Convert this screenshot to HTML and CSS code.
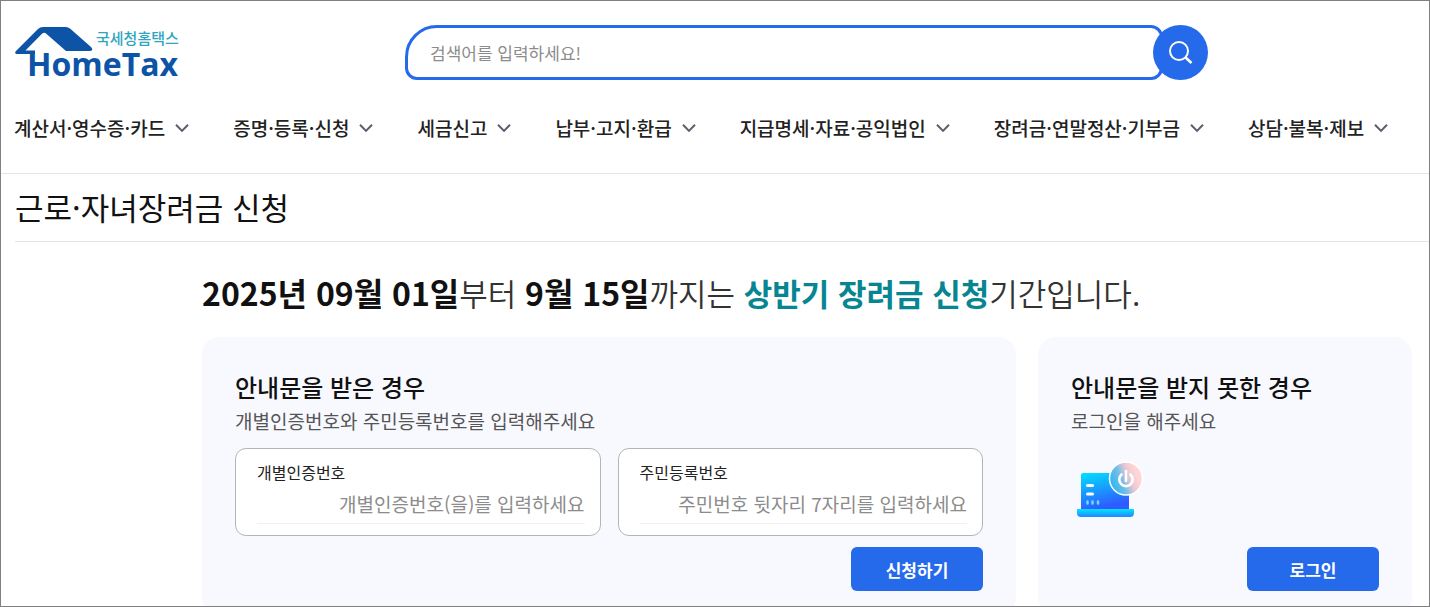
FILE: index.html
```html
<!DOCTYPE html>
<html lang="ko">
<head>
    <meta charset="UTF-8">
    <meta name="viewport" content="width=device-width, initial-scale=1.0">
    <title>국세청 홈택스</title>
    <link rel="stylesheet" href="styles.css">
</head>
<body>

<!-- Chevron shared by the menu items -->
<svg class="symbols" aria-hidden="true">
    <symbol id="chevron" viewBox="0 0 14 10">
        <path d="M1 1.700 L7 7.900 L13 1.700" fill="none" stroke="#5b5e6e" stroke-width="2"/>
    </symbol>
</svg>

<div class="page">
    <header class="header">
        <div class="header-top">
            <a href="#" class="logo">
                <svg width="165" height="60" viewBox="0 0 165 60" role="img" aria-label="국세청홈택스 HomeTax">
                    <path d="M28 2 H51 Q53 2 55 3.500 L76 22 Q79 25.500 75 26 H51 L31 8.500 Q29 7 27 8.800 L10.500 25.500 H20 V29 H1.500 Q-1 28.500 1 26 L23 4 Q25 2 28 2 Z" fill="#0d53a6"/>
                    <text x="81" y="19" class="logo-ko">국세청홈택스</text>
                    <text x="12" y="51" class="logo-en">HomeTax</text>
                </svg>
            </a>
            <form class="search">
                <input type="text" class="search-input" placeholder="검색어를 입력하세요!" aria-label="검색어">
                <button type="button" class="search-button" aria-label="검색">
                    <svg width="24" height="24" viewBox="0 0 24 24" fill="none" stroke="#fff">
                        <circle cx="10" cy="10" r="9" stroke-width="2"/>
                        <path d="M16.500 16.500 L22.500 22" stroke-width="2.600"/>
                    </svg>
                </button>
            </form>
        </div>
        <nav class="menu">
            <a href="#">계산서·영수증·카드 <svg class="chevron"><use href="#chevron"/></svg></a>
            <a href="#">증명·등록·신청 <svg class="chevron"><use href="#chevron"/></svg></a>
            <a href="#">세금신고 <svg class="chevron"><use href="#chevron"/></svg></a>
            <a href="#">납부·고지·환급 <svg class="chevron"><use href="#chevron"/></svg></a>
            <a href="#">지급명세·자료·공익법인 <svg class="chevron"><use href="#chevron"/></svg></a>
            <a href="#">장려금·연말정산·기부금 <svg class="chevron"><use href="#chevron"/></svg></a>
            <a href="#">상담·불복·제보 <svg class="chevron"><use href="#chevron"/></svg></a>
        </nav>
    </header>

    <main>
        <h1 class="title">근로·자녀장려금 신청</h1>

        <div class="content">
            <p class="period"><b class="date">2025년 09월 01일</b>부터 <b class="date">9월 15일</b>까지는 <b class="accent">상반기 장려금 신청</b>기간입니다.</p>

            <div class="cards">
                <form class="card">
                    <h2>안내문을 받은 경우</h2>
                    <p class="guide">개별인증번호와 주민등록번호를 입력해주세요</p>
                    <div class="fields">
                        <div class="field">
                            <label for="auth-number">개별인증번호</label>
                            <input type="text" id="auth-number" placeholder="개별인증번호(을)를 입력하세요">
                        </div>
                        <div class="field">
                            <label for="resident-number">주민등록번호</label>
                            <input type="text" id="resident-number" placeholder="주민번호 뒷자리 7자리를 입력하세요">
                        </div>
                    </div>
                    <button type="button" class="button">신청하기</button>
                </form>

                <section class="card">
                    <h2>안내문을 받지 못한 경우</h2>
                    <p class="guide">로그인을 해주세요</p>
                    <svg class="login-icon" width="68" height="58" viewBox="0 0 68 58" aria-hidden="true">
                        <defs>
                            <linearGradient id="screen" x1="0" y1="0" x2="0.3" y2="1">
                                <stop offset="0" stop-color="#00e1ff"/>
                                <stop offset="1" stop-color="#2f5bff"/>
                            </linearGradient>
                            <linearGradient id="base" x1="0" y1="0" x2="0" y2="1">
                                <stop offset="0" stop-color="#00e6ff"/>
                                <stop offset="1" stop-color="#2485ff"/>
                            </linearGradient>
                            <linearGradient id="power" x1="0.1" y1="0.7" x2="0.85" y2="0.4">
                                <stop offset="0" stop-color="#35b9f0"/>
                                <stop offset="0.350" stop-color="#6fbde6"/>
                                <stop offset="0.700" stop-color="#ebc9d2"/>
                                <stop offset="1" stop-color="#ffd6d6"/>
                            </linearGradient>
                        </defs>
                        <path d="M7 12 H50 Q53 12 53 15 V48 H5 V14 Q5 12 7 12 Z" fill="url(#screen)"/>
                        <path d="M1 48 H58 V52 Q58 56 54 56 H5 Q1 56 1 52 Z" fill="url(#base)"/>
                        <path d="M11.500 24.500 H16.500 M11.500 33 H16.500" stroke="#fff" stroke-width="3" stroke-linecap="round"/>
                        <path d="M11.500 40.500 V42.500 M16.500 40.500 V42.500 M22 40.500 V42.500" stroke="#6edbff" stroke-width="2.500" stroke-linecap="round"/>
                        <circle cx="50" cy="17.500" r="16.500" fill="url(#power)" stroke="#fff" stroke-width="1.500"/>
                        <path d="M45.500 13.500 A6.700 6.700 0 1 0 54.500 13.500 M50 10 V20" fill="none" stroke="#fff" stroke-width="2.600" stroke-linecap="round"/>
                    </svg>
                    <button type="button" class="button">로그인</button>
                </section>
            </div>
        </div>
    </main>
</div>

</body>
</html>
```
FILE: styles.css
```css
* {
    box-sizing: border-box;
}

body {
    margin: 0;
    font-family: "Noto Sans CJK KR", sans-serif;
    color: #111;
    background-color: #fff;
}

h1, h2, p {
    margin: 0;
}

a {
    color: inherit;
    text-decoration: none;
}

input, button {
    font-family: inherit;
}

.symbols {
    display: none;
}

.page {
    height: 100vh;
    overflow: hidden;
    border: 1px solid #808080;
}

/* Header */
.header {
    border-bottom: 1px solid #e4e4ea;
}

.header-top {
    display: flex;
    align-items: flex-start;
    justify-content: space-between;
    padding: 24px 221px 0 14px;
}

.logo svg {
    display: block;
}

.logo-ko {
    font-size: 15px;
    font-weight: 500;
    fill: #2fa5c0;
}

.logo-en {
    font-family: "Open Sans", sans-serif;
    font-size: 32px;
    font-weight: 700;
    fill: #0d53a6;
}

.search {
    display: flex;
    width: 68%;
    max-width: 803px;
}

.search-input {
    flex: 1;
    min-width: 0;
    height: 55px;
    padding: 0 22px;
    border: 3px solid #256aeb;
    border-radius: 32px 12px 12px 12px;
    font-size: 17px;
    outline: none;
}

.search-button {
    display: flex;
    align-items: center;
    justify-content: center;
    width: 55px;
    height: 55px;
    margin-left: -10px;
    padding: 0;
    border: none;
    border-radius: 50%;
    background-color: #256aeb;
    cursor: pointer;
    z-index: 1;
}

.menu {
    display: flex;
    gap: 44px;
    padding: 29px 14px 31px 13px;
}

.menu a {
    display: flex;
    align-items: center;
    gap: 10px;
    color: #222;
    font-size: 19px;
    font-weight: 500;
    line-height: 28px;
    white-space: nowrap;
}

.chevron {
    width: 14px;
    height: 10px;
}

/* Title */
.title {
    margin-left: 14px;
    padding: 9px 0 11px;
    border-bottom: 1px solid #e4e4ea;
    font-size: 31px;
    font-weight: 400;
    line-height: 47px;
}

/* Content */
.content {
    padding: 26px 17px 0 201px;
}

.period {
    color: #333;
    font-size: 31px;
    font-weight: 350;
    line-height: 48px;
    white-space: nowrap;
}

.period b {
    font-weight: 700;
}

.period .date {
    color: #111;
    font-size: 32px;
}

.period .accent {
    color: #078691;
}

.cards {
    display: grid;
    grid-template-columns: 814fr 374fr;
    gap: 22px;
    margin-top: 20px;
}

.card {
    display: flex;
    flex-direction: column;
    padding: 32px 33px 24px;
    border-radius: 18px;
    background-color: #f8f9ff;
}

.card h2 {
    font-size: 24px;
    font-weight: 500;
    line-height: 36px;
}

.guide {
    color: #555;
    font-size: 19px;
    line-height: 32px;
}

.fields {
    display: flex;
    gap: 17px;
    margin: 11px 0;
}

.field {
    display: flex;
    flex: 1;
    flex-direction: column;
    min-width: 0;
    height: 88px;
    padding: 11px 15px 11px 21px;
    border: 1px solid #b5b5b5;
    border-radius: 11px;
    background-color: #fff;
}

.field label {
    color: #222;
    font-size: 16px;
    line-height: 24px;
}

.field input {
    flex: 1;
    min-width: 0;
    min-height: 0;
    padding: 0;
    border: none;
    border-bottom: 1px solid #f0f0f5;
    font-size: 19px;
    text-align: right;
    outline: none;
}

input::placeholder {
    color: #8c8c8c;
    opacity: 1;
}

.button {
    align-self: flex-end;
    width: 132px;
    height: 44px;
    margin-top: auto;
    border: none;
    border-radius: 6px;
    background-color: #256aeb;
    color: #fff;
    font-size: 17px;
    font-weight: 700;
    cursor: pointer;
}

.login-icon {
    margin: 24px 0 0 5px;
}
```
